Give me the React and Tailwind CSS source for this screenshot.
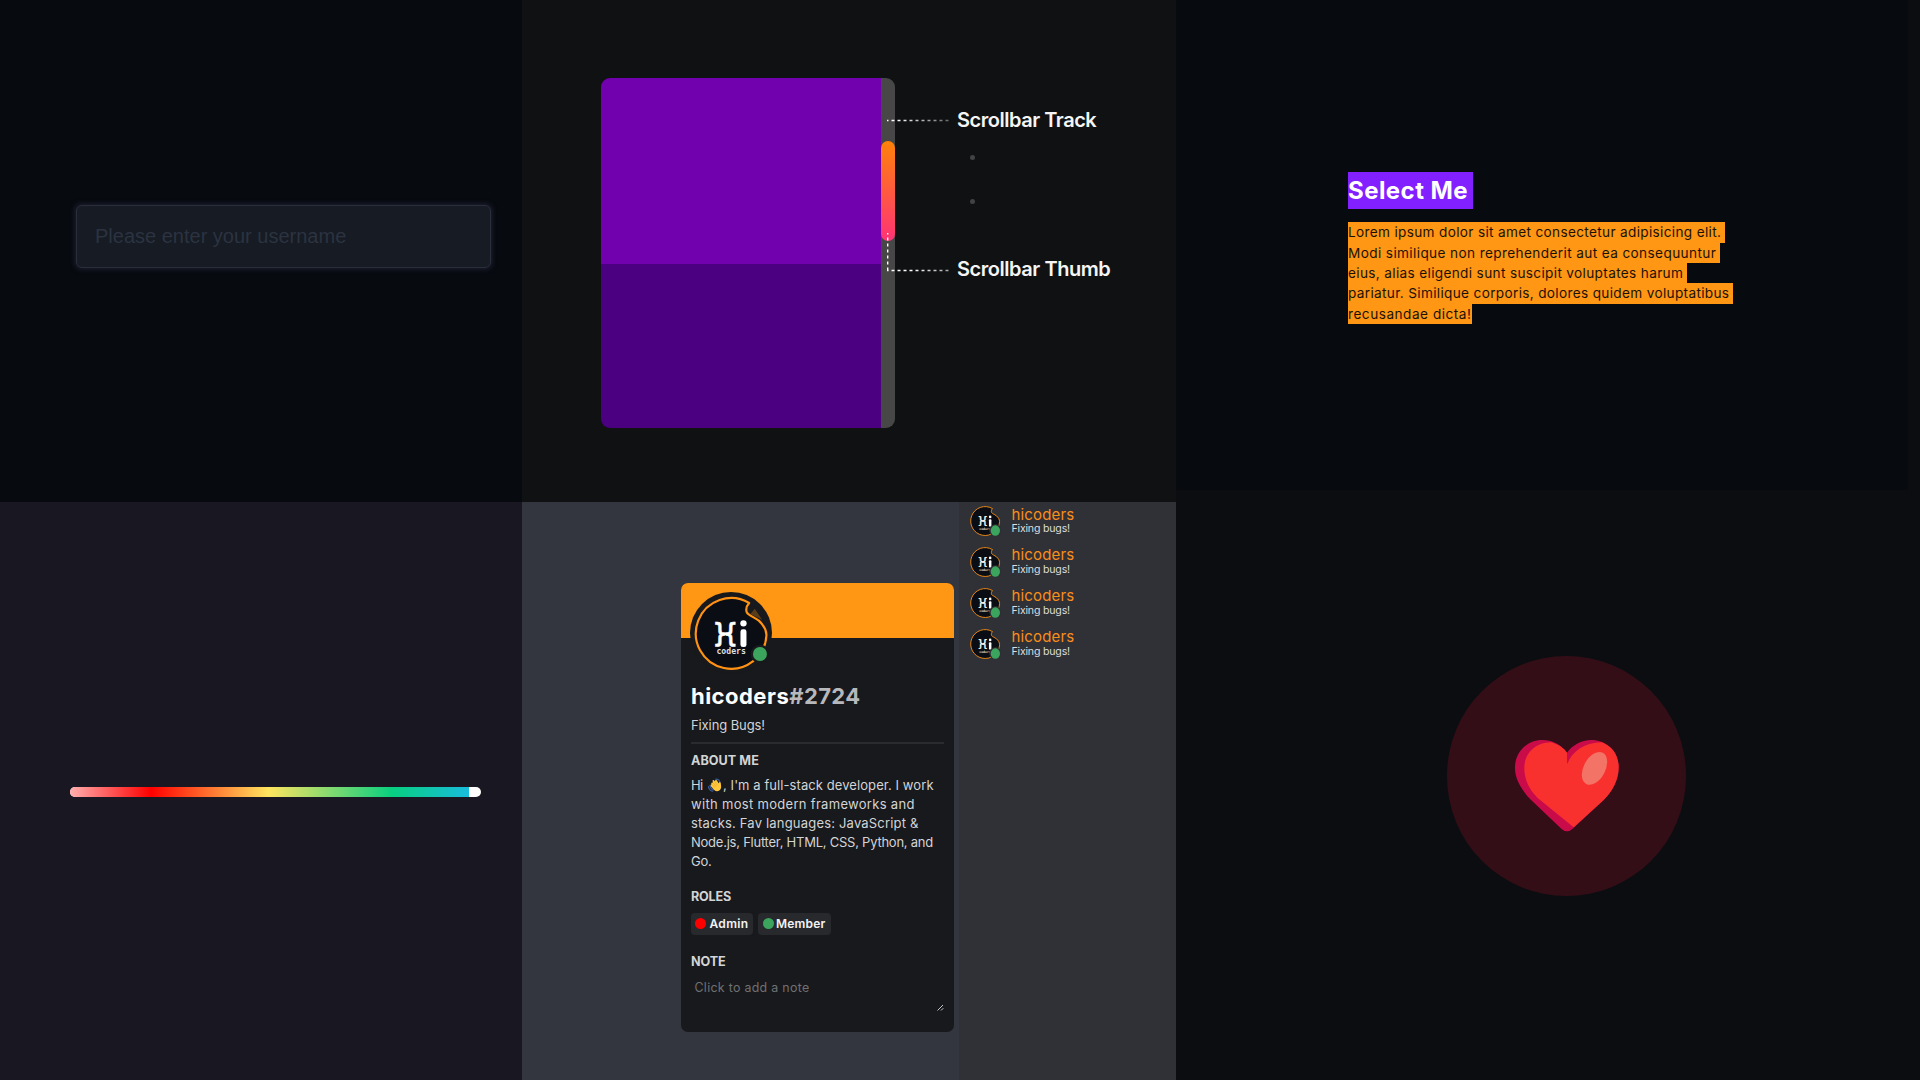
import React from 'react';

const INTER = "font-['Inter',sans-serif]";

function Avatar({ className, viewBox, framed, dot }) {
  return (
    <svg className={className} viewBox={viewBox} overflow="visible">
      {framed && <circle cx="138.6" cy="144" r="123" fill="#18191c" />}
      <path
        d="M193 54 C184 64 183 74 186 82 C192 92 206 95 222 107 C236 120 245 134 245 150 A106 106 0 1 1 193 54 Z"
        fill="#0a0d14"
        stroke="#ff9214"
        strokeWidth="6.5"
        strokeLinejoin="round"
      />
      {framed && <path d="M210 71 L232 104 L197 87 Z" fill="#8a5517" opacity="0.6" />}
      <g fill="#fff">
        <g transform="translate(86 170) scale(0.8 1)" stroke="#fff" strokeWidth="1.5">
          <text x="0" y="0" fontSize="80" fontWeight="700" fontFamily="'DejaVu Sans Mono', monospace">{'}'}</text>
        </g>
        <g transform="translate(118 170) scale(0.8 1)" stroke="#fff" strokeWidth="1.5">
          <text x="0" y="0" fontSize="80" fontWeight="700" fontFamily="'DejaVu Sans Mono', monospace">{'{'}</text>
        </g>
        <rect x="114" y="142" width="18" height="9" />
        <circle cx="176" cy="115" r="9.5" />
        <rect x="167" y="133" width="18" height="53" rx="7" />
        <text x="95" y="208" fontSize="24.4" fontWeight="700" fillOpacity="0.88" fontFamily="'DejaVu Sans Mono', monospace">coders</text>
      </g>
      {dot}
    </svg>
  );
}

function Wave() {
  return (
    <svg className="w-[14px] h-[14px] shrink-0 -mt-px" viewBox="0 0 36 36">
      <path d="M1 22 C2 29 6 33 12 34 M5 19 C6 25 9 29 14 31" stroke="#3b5e9e" strokeWidth="3" fill="none" strokeLinecap="round" />
      <path d="M20 3 C25 3 30 7 31 12" stroke="#3b5e9e" strokeWidth="3" fill="none" strokeLinecap="round" />
      <path
        d="M9 16 C7 13 10 10 13 13 L12 9 C11 5 15 4 17 8 L18 9 C18 5 22 4 24 8 L27 14 C27 10 33 9 33 14 C33 19 35 22 33 27 C30 35 21 36 16 31 L8 22 C5 18 8 16 9 16 Z"
        fill="#ffc83d"
      />
      <path d="M11 17 L18 25 M14 13 L21 22 M18 10 L24 19" stroke="#e69a2b" strokeWidth="1.5" fill="none" />
    </svg>
  );
}

function UsernameDemo() {
  return (
    <section className="h-[502px] bg-[#070a0f] pt-[205px] pl-[76px]">
      <input
        className="block w-[415px] h-[63px] rounded-[6px] border border-[#2a2d3a] bg-[#171b23] pl-[18px] text-[20px] font-['Liberation_Sans',Arial,sans-serif] placeholder:text-[#2b3341] placeholder:opacity-100 outline-none shadow-[0_0_4px_2px_#1a1b2b]"
        placeholder="Please enter your username"
      />
    </section>
  );
}

function GradientBar() {
  return (
    <section className="h-[578px] bg-[#191722] pt-[285px] pl-[70px]">
      <div className="flex w-[411px] h-[10px] rounded-[5px] overflow-hidden bg-white">
        <div className="w-[399px] h-full bg-[linear-gradient(90deg,#ffafaf_0px,#ff0000_81px,#ffe55f_198px,#08cf80_322px,#19bcdc_399px)]" />
      </div>
    </section>
  );
}

function ScrollbarDemo() {
  return (
    <section className="relative h-[502px] bg-[#101113] pt-[78px] pl-[79px] flex items-start">
      <div className="flex w-[294px] h-[350px] rounded-[9px] overflow-hidden">
        <div className="flex flex-col w-[280px]">
          <div className="h-[185.5px] bg-[#7100ae]" />
          <div className="flex-1 bg-[#4b0082]" />
        </div>
        <div className="flex-1 bg-[#474747] pt-[63px]">
          <div className="h-[100px] rounded-[7px] bg-[linear-gradient(180deg,#ff8208,#ff3376)]" />
        </div>
      </div>
      <div className={"ml-[62px] flex flex-col text-[20px] leading-[24px] font-semibold text-[#f5f5f5] whitespace-nowrap " + INTER}>
        <div className="mt-[30px] tracking-[-0.47px]">Scrollbar Track</div>
        <div className="mt-[23px] ml-[13px] size-[5px] rounded-full bg-[#424345]" />
        <div className="mt-[39px] ml-[13px] size-[5px] rounded-full bg-[#424345]" />
        <div className="mt-[53px] tracking-[-0.45px]">Scrollbar Thumb</div>
      </div>
      <svg className="absolute left-[365px] top-[110px] w-[64px] h-[165px]" viewBox="887 110 64 165" fill="none" strokeWidth="1.4" strokeDasharray="3 3">
        <defs>
          <linearGradient id="fade" gradientUnits="userSpaceOnUse" x1="887" y1="0" x2="951" y2="0">
            <stop offset="0.15" stopColor="#fff" />
            <stop offset="1" stopColor="#fff" stopOpacity="0.35" />
          </linearGradient>
          <linearGradient id="fadeSoft" gradientUnits="userSpaceOnUse" x1="887" y1="0" x2="951" y2="0">
            <stop offset="0.4" stopColor="#fff" />
            <stop offset="1" stopColor="#fff" stopOpacity="0.6" />
          </linearGradient>
        </defs>
        <path d="M887 120.5 H950" stroke="url(#fade)" strokeDashoffset="1.5" />
        <path d="M887.7 233 V271" stroke="#fff" strokeDashoffset="1.5" />
        <path d="M887 270.5 H950" stroke="url(#fadeSoft)" strokeDashoffset="1.5" />
      </svg>
    </section>
  );
}

function ProfileCard() {
  return (
    <div className={"relative ml-[159px] mt-[81px] w-[273px] h-[449px] rounded-[7px] overflow-hidden bg-[#18191c] text-[#d3d4d6] whitespace-nowrap " + INTER}>
      <div className="h-[54.6px] bg-[#ff9614]" />
      <Avatar
        className="absolute left-[9.2px] top-[9px] w-[82px] h-[82px]"
        viewBox="15.6 21 246 246"
        framed
        dot={
          <g>
            <circle cx="225.5" cy="207" r="28" fill="#18191c" />
            <circle cx="225.5" cy="207" r="21" fill="#3ba55d" />
          </g>
        }
      />
      <div className="flex flex-col px-[10px]">
        <div className="mt-[44.4px] text-[22px] leading-[28px] font-bold text-white tracking-[0.48px]">
          hicoders<span className="text-[#b7b8bc] tracking-[0.4px]">#2724</span>
        </div>
        <div className="mt-[6px] text-[13px] leading-[19px] tracking-[-0.1px]">Fixing Bugs!</div>
        <div className="mt-[7px] h-[2px] w-[253px] bg-[#2a2b2e]" />
        <div className="mt-[8px] text-[12.6px] leading-[18px] font-bold tracking-[0.05px]">ABOUT ME</div>
        <div className="mt-[6px] text-[13px] leading-[19px]">
          <div className="flex items-center">
            <span className="w-[17px] tracking-[-0.6px]">Hi</span>
            <Wave />
            <span className="ml-[1px] tracking-[0.08px]">, I'm a full-stack developer. I work</span>
          </div>
          <div className="tracking-[0.31px]">with most modern frameworks and</div>
          <div className="tracking-[0.19px]">stacks. Fav languages: JavaScript &amp;</div>
          <div className="tracking-[-0.24px]">Node.js, Flutter, HTML, CSS, Python, and</div>
          <div className="tracking-[-0.3px]">Go.</div>
        </div>
        <div className="mt-[17px] text-[12.6px] leading-[18px] font-bold tracking-[-0.2px]">ROLES</div>
        <div className="mt-[7px] flex gap-[5px] text-[12px] leading-[22px] font-semibold text-[#f3f3f4]">
          <div className="flex items-center w-[62px] h-[22px] rounded-[4px] bg-[#28292c] pl-[4px]">
            <span className="size-[11px] -mt-px rounded-full bg-[#ff0000]" />
            <span className="ml-[3.5px] tracking-[0.3px]">Admin</span>
          </div>
          <div className="flex items-center w-[72.5px] h-[22px] rounded-[4px] bg-[#28292c] pl-[4.5px]">
            <span className="size-[11px] -mt-px rounded-full bg-[#3ba55d]" />
            <span className="ml-[2.5px] tracking-[0.2px]">Member</span>
          </div>
        </div>
        <div className="mt-[18px] text-[12.6px] leading-[18px] font-bold tracking-[-0.1px]">NOTE</div>
        <div className="mt-[8.5px] pl-[3.5px] text-[12.4px] leading-[18px] text-[#707173] tracking-[0.3px]">Click to add a note</div>
        <svg className="mt-[7px] ml-[246px] w-[7px] h-[7px]" viewBox="0 0 7 7" stroke="#c8c8c8" strokeWidth="1">
          <path d="M0.5 6.5 L6 1 M4 6.5 L6.3 4.2" />
        </svg>
      </div>
    </div>
  );
}

const members = [0, 1, 2, 3];

function MemberList() {
  return (
    <div className={"w-[217px] bg-[#303136] pt-[3.6px] pl-[11px] " + INTER}>
      {members.map((m) => (
        <div key={m} className="flex items-start h-[40.9px]">
          <Avatar
            className="mt-[0.9px] w-[30px] h-[30px] shrink-0"
            viewBox="28 35 220 220"
            dot={
              <g>
                <ellipse cx="214" cy="215" rx="44" ry="46" fill="#303136" />
                <ellipse cx="214" cy="215" rx="34" ry="38" fill="#3ba55d" />
              </g>
            }
          />
          <div className="ml-[11.5px]">
            <div className="text-[15px] leading-[18px] text-[#fa8e1b] tracking-[0.15px]">hicoders</div>
            <div className="-mt-[1.6px] text-[10.6px] leading-[13px] text-[#dcddde] tracking-[-0.2px]">Fixing bugs!</div>
          </div>
        </div>
      ))}
    </div>
  );
}

function SelectionDemo() {
  return (
    <section className={"w-[732px] h-[490px] bg-[#070a0f] pt-[172px] pl-[172px] whitespace-nowrap " + INTER}>
      <div className="w-[125.3px] h-[37px] leading-[38px] bg-[#8220ff] text-white text-[24px] font-bold tracking-[0.44px]">Select Me</div>
      <div className="mt-[13.4px] text-[13.6px] leading-[21.2px] text-[#1a1206]">
        <div className="w-[377px] h-[20.3px] bg-[#ff9614] tracking-[0.34px]">Lorem ipsum dolor sit amet consectetur adipisicing elit.</div>
        <div className="w-[372px] h-[20.3px] bg-[#ff9614] tracking-[0.39px]">Modi similique non reprehenderit aut ea consequuntur</div>
        <div className="w-[339px] h-[20.3px] bg-[#ff9614] tracking-[0.35px]">eius, alias eligendi sunt suscipit voluptates harum</div>
        <div className="w-[385px] h-[20.3px] bg-[#ff9614] tracking-[0.34px]">pariatur. Similique corporis, dolores quidem voluptatibus</div>
        <div className="w-[124px] h-[20.3px] bg-[#ff9614] tracking-[0.52px]">recusandae dicta!</div>
      </div>
    </section>
  );
}

function HeartDemo() {
  return (
    <section className="pt-[166.3px] pl-[271px]">
      <div className="flex justify-center w-[239.4px] h-[239.4px] rounded-full bg-[#330e17]">
        <svg className="mt-[83.5px] w-[104px] h-[92px]" viewBox="254 300 312 276">
          <path
            d="M410 338 C392 313 365 300 336 300 C290 300 253 337 254 385 C254 420 275 450 300 478 L393 566 Q410 582 427 566 L520 480 C545 455 565 422 565 382 C565 335 528 300 483 300 C453 300 426 316 410 338 Z"
            fill="#ca0b4a"
          />
          <path
            d="M410 338 L410 373 C425 335 460 308 515 307 C548 320 565 348 565 382 C565 422 545 455 520 480 L430 562 L321 473 C298 450 282 420 282 385 C281 343 312 308 363 307 C385 314 400 324 410 338 Z"
            fill="#f8312f"
          />
          <ellipse cx="492.5" cy="385" rx="32.5" ry="53" transform="rotate(28 492.5 385)" fill="#f37366" />
        </svg>
      </div>
    </section>
  );
}

export default function App() {
  return (
    <main className="flex w-[1920px] h-[1080px] overflow-hidden bg-[#0b0d11]">
      <div className="w-[522px]">
        <UsernameDemo />
        <GradientBar />
      </div>
      <div className="w-[654px]">
        <ScrollbarDemo />
        <section className="flex h-[578px]">
          <div className="w-[437px] bg-[#33363e]">
            <div className="flex">
              <ProfileCard />
            </div>
          </div>
          <MemberList />
        </section>
      </div>
      <div className="w-[744px]">
        <SelectionDemo />
        <HeartDemo />
      </div>
    </main>
  );
}
